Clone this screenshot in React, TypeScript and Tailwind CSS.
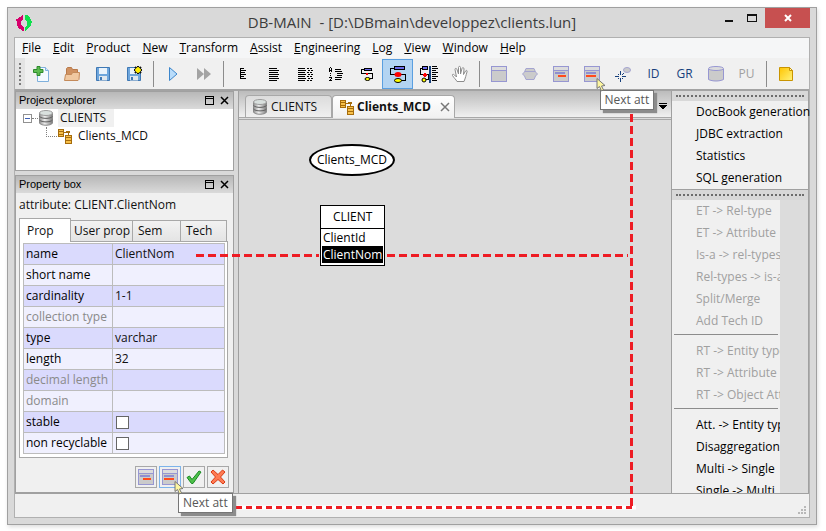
import type { ReactNode } from 'react';

const MENUS = [
  'File',
  'Edit',
  'Product',
  'New',
  'Transform',
  'Assist',
  'Engineering',
  'Log',
  'View',
  'Window',
  'Help',
];

const PROPERTIES = [
  { name: 'name', value: 'ClientNom' },
  { name: 'short name', value: '' },
  { name: 'cardinality', value: '1-1' },
  { name: 'collection type', value: '', disabled: true },
  { name: 'type', value: 'varchar' },
  { name: 'length', value: '32' },
  { name: 'decimal length', value: '', disabled: true },
  { name: 'domain', value: '', disabled: true },
  { name: 'stable', checkbox: true },
  { name: 'non recyclable', checkbox: true },
];

const PLUGINS = [
  'DocBook generation',
  'JDBC extraction',
  'Statistics',
  'SQL generation',
];

const TRANSFORMS = [
  {
    disabled: true,
    items: [
      'ET -> Rel-type',
      'ET -> Attribute',
      'Is-a -> rel-types',
      'Rel-types -> is-a',
      'Split/Merge',
      'Add Tech ID',
    ],
  },
  {
    disabled: true,
    items: ['RT -> Entity type', 'RT -> Attribute', 'RT -> Object Att'],
  },
  {
    disabled: false,
    items: [
      'Att. -> Entity type',
      'Disaggregation',
      'Multi -> Single',
      'Single -> Multi',
    ],
  },
];

function Icon({ children, size = 16 }: { children: ReactNode; size?: number }) {
  return (
    <svg
      width={size}
      height={size}
      viewBox={`0 0 ${size} ${size}`}
      fill="none"
      className="shrink-0"
      aria-hidden="true"
    >
      {children}
    </svg>
  );
}

function LogoIcon() {
  return (
    <Icon>
      <g shapeRendering="crispEdges">
        <path
          d="M7 0v5H6v1H5v4h1v1h1v1h1v4H6v-1H5v-1H3v-1H2v-2H1V6H0V4h2V3h1V2h2V1h1V0z"
          fill="#d6006c"
        />
        <path
          d="M9 16v-4h1v-1h1V6h-1V5H9V0h3v1h1v1h1v2h1v2h1v2h-1v3h-1v1h-1v1h-1v1h-1v1h-1v1z"
          fill="#0fe04c"
        />
      </g>
    </Icon>
  );
}

function NewIcon() {
  return (
    <Icon>
      <path d="M4.500 1.500h8l3 3v11h-11z" fill="#f4faff" stroke="#7fb0dc" />
      <path d="M12.500 1.500v3h3" fill="#d7eafa" stroke="#7fb0dc" />
      <path
        d="M4 .5h3v3h3v3H7v3H4v-3H.500v-3H4z"
        fill="#5dbb4f"
        stroke="#2c8a2c"
      />
    </Icon>
  );
}

function OpenIcon() {
  return (
    <Icon>
      <path
        d="M2.500 14V2.500l1-1h4l1 2h5v10.500z"
        fill="#cf9161"
        stroke="#b97a4b"
      />
      <path
        d="M.5 14.500l1-6h6l1-2h7l-.5 7-1 1z"
        fill="#f0c8a0"
        stroke="#c48a5a"
      />
    </Icon>
  );
}

function SaveIcon({ star }: { star?: boolean }) {
  return (
    <Icon>
      <path
        d="M1.500 1.500h13v13h-13z"
        fill="#6ea6dc"
        stroke="#3f78b4"
        strokeLinejoin="round"
      />
      <path d="M4 2h8v6H4z" fill="#eaf3fb" />
      <path d="M4 10h8v4.500H4z" fill="#dfe7ee" />
      <path d="M5 11h2v3H5z" fill="#3f78b4" />
      {star ? (
        <>
          <path
            d="M12 0v8M8 4h8M9 1l6 6M15 1L9 7"
            stroke="#111"
            strokeWidth="2"
          />
          <path d="M12 1v6M9 4h6" stroke="#ffee00" strokeWidth="1.500" />
          <circle cx="12" cy="4" r="2.500" fill="#ffee00" />
        </>
      ) : null}
    </Icon>
  );
}

function PlayIcon() {
  return (
    <Icon>
      <path d="M4.500 1.500v13L12 8z" fill="#b9dcfa" stroke="#3c86cc" />
    </Icon>
  );
}

function ForwardIcon() {
  return (
    <Icon>
      <path d="M1 2v12l7-6zM8 2v12l7-6z" fill="#a3a3a3" />
    </Icon>
  );
}

function TextViewIcon({ variant }: { variant: number }) {
  return (
    <Icon>
      <g stroke="#000" shapeRendering="crispEdges">
        {variant === 0 ? (
          <path d="M6 2.500h3M6 4.500h5M6 6.500h4M6 8.500h5M6 10.500h3M6 12.500h5M5.500 2v11" />
        ) : null}
        {variant === 1 ? (
          <path d="M3 2.500h8M3 4.500h10M3 6.500h9M3 8.500h10M3 10.500h9M3 12.500h10M3 14.500h8" />
        ) : null}
        {variant === 2 ? (
          <>
            <path d="M1 2.500h7M1 4.500h8M1 6.500h7M1 8.500h8M1 10.500h7M1 12.500h8M1 14.500h7" />
            <path
              d="M10 2.500h5M11 4.500h5M10 6.500h5M11 8.500h5M10 10.500h5M11 12.500h5M10 14.500h5"
              strokeDasharray="2 1"
            />
          </>
        ) : null}
        {variant === 3 ? (
          <>
            <path d="M7 3.500h6M7 5.500h7M9 7.500h6M9 9.500h5M7 11.500h7M7 13.500h6" />
            <path d="M1.500 2v4M3.500 2v4M2 1.500h1M2 4.500h1M2.500 7v1M2.500 9v1M1 11.500h3M3 12.500h1M2 13.500h1M1 14.500h3" />
          </>
        ) : null}
      </g>
    </Icon>
  );
}

function SchemaIcon({ variant }: { variant: 'small' | 'large' | 'mixed' }) {
  if (variant === 'small') {
    return (
      <Icon>
        <g shapeRendering="crispEdges">
          <path d="M5 3.500H2.500v4H8M9 7.500h4.500v5H10" stroke="#000" />
          <path d="M5.500 2.500h7v2h-7z" fill="#6b6bea" stroke="#000" />
          <path d="M7 7h2v2H7z" fill="#f00" />
        </g>
        <ellipse cx="8.500" cy="13" rx="2.500" ry="1.500" fill="#ff0" stroke="#000" />
      </Icon>
    );
  }
  if (variant === 'large') {
    return (
      <Icon size={18}>
        <g shapeRendering="crispEdges">
          <path d="M5 3.500H1.500v6H7M10 9.500h6.500v6H11" stroke="#000" />
          <path d="M5.500 1.500h10v3h-10z" fill="#6b6bea" stroke="#000" />
        </g>
        <ellipse cx="9" cy="9.500" rx="3.500" ry="2.500" fill="#f00" />
        <ellipse cx="9" cy="15.500" rx="3.500" ry="2" fill="#ff0" stroke="#000" />
      </Icon>
    );
  }
  return (
    <Icon size={18}>
      <g shapeRendering="crispEdges">
        <path d="M3 3.500H.5v6H4M5 9.500h3.500v5H6" stroke="#000" />
        <path d="M2.500 1.500h5v3h-5z" fill="#6b6bea" stroke="#000" />
        <path d="M3 9h4v2H3zM4 8h2v4H4z" fill="#f00" />
        <path d="M9 1h2v17H9z" fill="#17407c" />
        <path
          d="M12 1.500h5M12 3.500h6M12 5.500h4M12 7.500h6M12 9.500h4M12 11.500h6M12 13.500h4M12 15.500h5"
          stroke="#000"
        />
      </g>
      <circle cx="4" cy="15" r="2" fill="#ff0" stroke="#000" />
    </Icon>
  );
}

function HandIcon() {
  return (
    <Icon size={18}>
      <path
        d="M6 16.500c-1-2-3-3.500-4.500-6C1 9 2.500 9 3.500 10L5.500 12 4 4.500C4 3 5.500 3 6 4.500L7.500 9V2.500c0-1.500 2-1.500 2 0V9l1.500-5.500c.5-1.500 2-1 2 .5L12.500 9.500 14.500 6c.8-1.200 2-.5 1.500 1-1 3-1.500 6-3 9.500z"
        fill="#fff"
        stroke="#8c8c8c"
      />
    </Icon>
  );
}

function EntityIcon() {
  return (
    <Icon>
      <g shapeRendering="crispEdges">
        <path d="M.5.5h15v15H.5z" fill="#cbcbcb" stroke="#9797d2" />
        <path d="M1 4.500h14" stroke="#9797d2" />
        <path d="M1 1h14v3H1z" fill="#dcdcdc" />
      </g>
    </Icon>
  );
}

function RelTypeIcon() {
  return (
    <Icon>
      <path
        d="M4 2.500h8L13.500 6l2 2-2 2-1.500 3.500H4L2.500 10l-2-2 2-2z"
        fill="#cbcbcb"
        stroke="#a4a4d0"
      />
      <path d="M3 5.500h10" stroke="#a4a4d0" />
    </Icon>
  );
}

function AttributeIcon({ next }: { next?: boolean }) {
  return (
    <Icon>
      <g shapeRendering="crispEdges">
        <path d="M.5.5h15v15H.5z" fill="#cbcbcb" stroke="#9797d2" />
        <path d="M1 1h14v3H1z" fill="#dcdcdc" />
        <path d="M1 4.500h14" stroke="#9797d2" />
        <path d="M2 6h10v2H2z" fill="#8f8fd0" />
        <path d={next ? 'M2 9h10v2H2z' : 'M5 9h8v2H5z'} fill="#ff4a1c" />
      </g>
    </Icon>
  );
}

function RoleIcon() {
  return (
    <Icon>
      <g stroke="#17407c">
        <path
          d="M5.500 5v4M5.500 12v4M0 10.500h4M7 10.500h4"
          shapeRendering="crispEdges"
        />
        <path d="M3 8l1 1M7 9l2-2M3 13l1-1M8 13l-1-1" />
      </g>
      <ellipse cx="12" cy="4" rx="3.500" ry="2.500" fill="#cbcbcb" stroke="#a4a4d0" />
    </Icon>
  );
}

function CollectionIcon() {
  return (
    <Icon>
      <path
        d="M.5 3v10.500c4 2 11 2 15 0V3"
        fill="#cbcbcb"
        stroke="#9797d2"
      />
      <ellipse cx="8" cy="2.500" rx="7.500" ry="2" fill="#dcdcdc" stroke="#9797d2" />
    </Icon>
  );
}

function NoteIcon() {
  return (
    <Icon>
      <path d="M1.500 1.500h10l3 3v10h-13z" fill="url(#note)" stroke="#c99400" />
      <path d="M11.500 1.500v3h3z" fill="#fff8d0" stroke="#c99400" />
      <defs>
        <linearGradient id="note" x1="0" y1="0" x2="1" y2="1">
          <stop stopColor="#ffc400" />
          <stop offset="1" stopColor="#fff27a" />
        </linearGradient>
      </defs>
    </Icon>
  );
}

function DatabaseIcon() {
  return (
    <Icon>
      <path
        d="M1.500 3v10c1 3 12 3 13 0V3z"
        fill="url(#disk)"
        stroke="#8a8a8a"
      />
      <path
        d="M1.500 6.500c2 2.500 11 2.500 13 0M1.500 10c2 2.500 11 2.500 13 0"
        stroke="#5f5f5f"
      />
      <ellipse cx="8" cy="3" rx="6.500" ry="2.500" fill="#d9e0de" stroke="#9c9c9c" />
      <defs>
        <linearGradient id="disk" x1="0" y1="0" x2="1" y2="0">
          <stop stopColor="#8e8e8e" />
          <stop offset=".4" stopColor="#efefef" />
          <stop offset="1" stopColor="#7a7a7a" />
        </linearGradient>
      </defs>
    </Icon>
  );
}

function ModelIcon() {
  return (
    <Icon>
      <g shapeRendering="crispEdges" stroke="#a66c0c">
        <path d="M1.500 1.500h5v7h-5z" fill="#f7c04a" />
        <path d="M8.500 7.500h6v8h-6z" fill="#f7c04a" />
        <path d="M2 3.500h4M2 6.500h4M9 9.500h5M9 12.500h5M7 4.500h2M11.500 5v2" />
        <path d="M9.500 3.500h3v1h-3z" fill="#f7c04a" />
      </g>
    </Icon>
  );
}

function CheckIcon() {
  return (
    <Icon>
      <path
        d="M1 8.500L3.500 7 6 10.500 13 2l2 1L7 14.500H5.500z"
        fill="#4fc04a"
        stroke="#188a22"
      />
    </Icon>
  );
}

function CancelIcon() {
  return (
    <Icon>
      <path
        d="M1 3l2-2 5 4.500L12.500 1 15 3l-4.500 5L15 13l-2 2-5-4.500L3 15l-2-2 4.500-5z"
        fill="#ff7a52"
        stroke="#d83a14"
      />
    </Icon>
  );
}

function HoverTip() {
  return (
    <>
      <span className="absolute left-full top-full z-20 -mt-1 -ml-1">
        <svg width="10" height="15" viewBox="0 0 10 15" aria-hidden="true">
          <path
            d="M1 .5v10l2.500-2 2 4.500 2-1-2-4 3.500-.5z"
            fill="#fdf6a0"
            stroke="#777"
          />
        </svg>
      </span>
      <span
        role="tooltip"
        className="absolute left-full top-full z-10 mt-2 border border-[#767676] bg-white px-1 leading-[18px] whitespace-nowrap text-[#575757] shadow-[3px_3px_1px_#8c8c8c]"
      >
        Next att
      </span>
    </>
  );
}

function ToolButton({
  label,
  selected,
  hint,
  children,
}: {
  label: string;
  selected?: boolean;
  hint?: boolean;
  children: ReactNode;
}) {
  return (
    <button
      type="button"
      aria-label={label}
      className={
        selected
          ? 'flex h-[30px] w-[31px] items-center justify-center border border-[#5a9fe0] bg-[#b3d4f2]'
          : 'flex h-[30px] w-[31px] items-center justify-center'
      }
    >
      {hint ? (
        <span className="relative">
          {children}
          <HoverTip />
        </span>
      ) : (
        children
      )}
    </button>
  );
}

function ToolSeparator() {
  return (
    <span className="flex w-2 justify-center">
      <span className="h-[26px] w-px bg-[#8c8c8c]" />
    </span>
  );
}

function Toolbar() {
  return (
    <div
      role="toolbar"
      className="flex h-[33px] items-center border-b-2 border-[#a3a3a3] bg-[#f0f0f0]"
    >
      <span className="flex h-full w-[10px] items-center justify-center bg-[#e4e4e4]">
        <span className="h-[22px] border-l-2 border-dotted border-[#7c7c7c]" />
      </span>
      <ToolButton label="New"><NewIcon /></ToolButton>
      <ToolButton label="Open"><OpenIcon /></ToolButton>
      <ToolButton label="Save"><SaveIcon /></ToolButton>
      <ToolButton label="Save as"><SaveIcon star /></ToolButton>
      <ToolSeparator />
      <ToolButton label="Run"><PlayIcon /></ToolButton>
      <ToolButton label="Continue"><ForwardIcon /></ToolButton>
      <ToolSeparator />
      <ToolButton label="Text compact"><TextViewIcon variant={0} /></ToolButton>
      <ToolButton label="Text standard"><TextViewIcon variant={1} /></ToolButton>
      <ToolButton label="Text extended"><TextViewIcon variant={2} /></ToolButton>
      <ToolButton label="Text sorted"><TextViewIcon variant={3} /></ToolButton>
      <ToolButton label="Graph compact"><SchemaIcon variant="small" /></ToolButton>
      <ToolButton label="Graph standard" selected><SchemaIcon variant="large" /></ToolButton>
      <ToolButton label="Graph dependency"><SchemaIcon variant="mixed" /></ToolButton>
      <ToolButton label="Move"><HandIcon /></ToolButton>
      <ToolSeparator />
      <ToolButton label="Entity type"><EntityIcon /></ToolButton>
      <ToolButton label="Rel-type"><RelTypeIcon /></ToolButton>
      <ToolButton label="First att"><AttributeIcon /></ToolButton>
      <ToolButton label="Next att" hint><AttributeIcon next /></ToolButton>
      <ToolButton label="Role"><RoleIcon /></ToolButton>
      <ToolButton label="Identifier">
        <span className="text-[#17407c]">ID</span>
      </ToolButton>
      <ToolButton label="Group">
        <span className="text-[#17407c]">GR</span>
      </ToolButton>
      <ToolButton label="Collection"><CollectionIcon /></ToolButton>
      <ToolButton label="Processing unit">
        <span className="text-[#a0a0a0]">PU</span>
      </ToolButton>
      <ToolSeparator />
      <ToolButton label="Note"><NoteIcon /></ToolButton>
    </div>
  );
}

function PanelHeader({ title }: { title: string }) {
  return (
    <header className="flex h-[17px] items-center bg-linear-to-b from-[#b8b8b8] to-[#dadada] pr-1 pl-[3px] font-['Liberation_Sans',sans-serif] text-[11px] text-black">
      <h2 className="flex-1">{title}</h2>
      <button type="button" aria-label={`Maximize ${title}`} className="w-[15px]">
        <svg width="9" height="9" viewBox="0 0 9 9" shapeRendering="crispEdges">
          <path d="M.5.5h8v8h-8zM1 2.500h7" fill="none" stroke="#000" />
        </svg>
      </button>
      <button type="button" aria-label={`Close ${title}`}>
        <svg width="9" height="9" viewBox="0 0 9 9">
          <path d="M1 1l7 7M8 1L1 8" stroke="#000" strokeWidth="1.500" />
        </svg>
      </button>
    </header>
  );
}

function ProjectExplorer() {
  return (
    <section className="h-20 border border-[#a0a0a0] bg-white">
      <PanelHeader title="Project explorer" />
      <ul>
        <li>
          <div className="flex h-[18px] items-center pl-[7px]">
            <button type="button" aria-label="Collapse CLIENTS">
              <svg width="9" height="9" viewBox="0 0 9 9" shapeRendering="crispEdges">
                <path d="M.5.5h8v8h-8z" fill="#fff" stroke="#919191" />
                <path d="M2 4.500h5" stroke="#3c5fb4" />
              </svg>
            </button>
            <span className="w-[6px] border-t border-dotted border-[#808080]" />
            <DatabaseIcon />
            <span className="ml-1 bg-[#f0f0f0] pr-2 pl-[2px] leading-[18px]">CLIENTS</span>
          </div>
          <ul>
            <li className="flex h-[18px] items-center pl-[30px]">
              <span className="mb-2 h-[10px] w-[11px] border-b border-l border-dotted border-[#808080]" />
              <ModelIcon />
              <span className="ml-[5px]">Clients_MCD</span>
            </li>
          </ul>
        </li>
      </ul>
    </section>
  );
}

function PropertyTable() {
  return (
    <table className="w-full table-fixed border-collapse border border-[#a8a8a8]">
      <colgroup>
        <col className="w-[89px]" />
        <col />
      </colgroup>
      <tbody>
        {PROPERTIES.map((p, i) => (
          <tr
            key={p.name}
            className={i % 2 === 0 ? 'h-[21px] bg-[#dadafd]' : 'h-[21px] bg-[#f0f0fe]'}
          >
            <th
              scope="row"
              className={
                p.disabled
                  ? 'border border-[#bcbcbc] p-0 pl-[2px] text-left font-normal text-[#8a8a8a]'
                  : 'border border-[#bcbcbc] p-0 pl-[2px] text-left font-normal text-black'
              }
            >
              {p.name}
            </th>
            <td className="border border-[#bcbcbc] p-0 pl-[2px]">
              {p.checkbox ? (
                <input
                  type="checkbox"
                  aria-label={p.name}
                  className="ml-px block size-[13px] appearance-none border border-[#666] bg-white"
                />
              ) : (
                p.value
              )}
            </td>
          </tr>
        ))}
      </tbody>
    </table>
  );
}

function PropertyBox() {
  return (
    <section className="flex min-h-0 flex-1 flex-col border border-[#a0a0a0] bg-[#f0f0f0]">
      <PanelHeader title="Property box" />
      <p className="pt-[3px] pl-[3px] leading-[18px]">attribute: CLIENT.ClientNom</p>
      <div role="tablist" className="mt-1 flex items-end px-[3px]">
        <button
          type="button"
          role="tab"
          aria-selected="true"
          className="relative -mb-px h-[24px] w-[52px] border border-b-0 border-[#a8a8a8] bg-white pl-[7px] text-left"
        >
          Prop
        </button>
        <button
          type="button"
          role="tab"
          className="h-[21px] w-[62px] border border-b-0 border-l-0 border-[#a8a8a8] bg-linear-to-b from-[#f2f2f2] to-[#e4e4e4] pl-[3px] text-left whitespace-nowrap"
        >
          User prop
        </button>
        <button
          type="button"
          role="tab"
          className="h-[21px] w-12 border border-b-0 border-l-0 border-[#a8a8a8] bg-linear-to-b from-[#f2f2f2] to-[#e4e4e4] pl-[5px] text-left"
        >
          Sem
        </button>
        <button
          type="button"
          role="tab"
          className="h-[21px] w-[46px] border border-b-0 border-l-0 border-[#a8a8a8] bg-linear-to-b from-[#f2f2f2] to-[#e4e4e4] pl-[5px] text-left"
        >
          Tech
        </button>
      </div>
      <div className="mr-[5px] ml-[3px] border border-[#a8a8a8] bg-white pt-px pr-[2px] pb-[3px] pl-[3px]">
        <PropertyTable />
      </div>
      <div className="flex justify-end gap-[2px] pt-2 pr-[4px]">
        <button
          type="button"
          aria-label="First att"
          className="flex size-[22px] items-center justify-center border border-[#a8a8a8]"
        >
          <AttributeIcon />
        </button>
        <button
          type="button"
          aria-label="Next att"
          className="flex size-[22px] items-center justify-center border border-[#7db4ea]"
        >
          <span className="relative">
            <AttributeIcon next />
            <HoverTip />
          </span>
        </button>
        <button
          type="button"
          aria-label="Apply"
          className="flex size-[22px] items-center justify-center border border-[#a8a8a8]"
        >
          <CheckIcon />
        </button>
        <button
          type="button"
          aria-label="Cancel"
          className="flex size-[22px] items-center justify-center border border-[#a8a8a8]"
        >
          <CancelIcon />
        </button>
      </div>
    </section>
  );
}

function Workspace() {
  return (
    <main className="flex min-w-0 flex-1 flex-col border-l border-[#a0a0a0] bg-[#dcdcdc]">
      <div
        role="tablist"
        className="flex h-[27px] items-end border-b border-[#a8a8a8] bg-linear-to-b from-[#bcbcbc] to-[#f0f0f0] pl-[6px]"
      >
        <button
          type="button"
          role="tab"
          className="flex h-[22px] w-[87px] items-center gap-[3px] rounded-t-sm border border-b-0 border-[#a8a8a8] bg-linear-to-b from-[#dcdcdc] to-[#f0f0f0] pl-[6px]"
        >
          <DatabaseIcon />
          CLIENTS
        </button>
        <div className="-mb-px flex h-[23px] w-[123px] items-center rounded-t-sm border border-b-0 border-[#a8a8a8] bg-linear-to-b from-white to-[#f0f0f0] pl-[6px]">
          <button
            type="button"
            role="tab"
            aria-selected="true"
            className="flex flex-1 items-center gap-[2px] font-bold"
          >
            <ModelIcon />
            Clients_MCD
          </button>
          <button type="button" aria-label="Close Clients_MCD" className="pr-[4px]">
            <svg width="10" height="10" viewBox="0 0 10 10">
              <path d="M1 1l8 8M9 1L1 9" stroke="#777" strokeWidth="1.500" />
            </svg>
          </button>
        </div>
        <button type="button" aria-label="Tab list" className="mr-1 mb-2 ml-auto">
          <svg width="8" height="6" viewBox="0 0 8 6" shapeRendering="crispEdges">
            <path d="M0 0h8v1H0zM0 2h8v1L4 6 0 3z" fill="#000" />
          </svg>
        </button>
      </div>
      <div className="relative mt-px flex-1 overflow-hidden border-t border-[#a8a8a8] text-black">
        <div className="absolute top-[24px] left-[70px] rounded-[50%] border-2 border-black bg-white px-[6px] py-[2px] leading-6">
          Clients_MCD
        </div>
        <div className="absolute top-[85px] left-[81px] border border-black bg-white">
          <div className="border-b border-black text-center leading-[22px]">CLIENT</div>
          <div className="px-px pb-[2px] leading-[17px]">
            <div className="px-px">ClientId</div>
            <div className="bg-black px-px text-white">ClientNom</div>
          </div>
        </div>
      </div>
    </main>
  );
}

function Grip() {
  return (
    <div className="flex h-[10px] items-center bg-[#d8d8d8] px-1">
      <span className="flex-1 border-t-2 border-dotted border-[#6c6c6c]" />
    </div>
  );
}

function SideTools() {
  return (
    <aside className="flex w-[138px] shrink-0 flex-col border-x border-[#a0a0a0] bg-[#dcdcdc]">
      <section className="border-b border-[#a0a0a0] bg-[#f0f0f0]">
        <Grip />
        {PLUGINS.map((item) => (
          <button
            key={item}
            type="button"
            className="block w-full pl-6 text-left leading-[22px] whitespace-nowrap text-black"
          >
            {item}
          </button>
        ))}
      </section>
      <Grip />
      <section className="h-0 w-[108px] flex-auto overflow-hidden bg-[#f0f0f0]">
        {TRANSFORMS.map((group, i) => (
          <div
            key={group.items[0]}
            className={i > 0 ? 'mt-[2px] mr-[2px] ml-[2px] border-t border-[#8c8c8c] pt-[5px]' : 'mx-[2px]'}
          >
            {group.items.map((item) => (
              <button
                key={item}
                type="button"
                disabled={group.disabled}
                className="block w-full pl-[22px] text-left leading-[22px] whitespace-nowrap text-black disabled:text-[#a0a0a0]"
              >
                {item}
              </button>
            ))}
          </div>
        ))}
      </section>
    </aside>
  );
}

// Dashed red path that links the property, the entity and both "Next att" buttons.
function GuidePath() {
  return (
    <svg
      className="pointer-events-none absolute inset-0 h-full w-full"
      fill="none"
      stroke="#ee1c24"
      strokeWidth="3"
      aria-hidden="true"
    >
      <path d="M237 507.500H636" stroke="#fff" strokeWidth="4" />
      <path d="M196 255.500H319M387 255.500H628" strokeDasharray="8 4" />
      <path d="M631.500 114V509" strokeDasharray="8 4" />
      <path d="M236 507.500H633" strokeDasharray="6 4" />
    </svg>
  );
}

export default function App() {
  return (
    <div className="relative flex h-screen bg-white pt-[7px] pr-[9px] pb-[6px] pl-[7px] font-['Open_Sans',sans-serif] text-xs text-[#111]">
      <div className="flex min-w-0 flex-1 flex-col border border-[#a0a0a0] bg-[#d9d9d9] shadow-[1px_2px_4px_#ddd]">
        <header className="grid h-[29px] shrink-0 grid-cols-[1fr_auto_1fr]">
          <span className="flex items-center pl-2"><LogoIcon /></span>
          <h1 className="text-[15px] leading-[29px] whitespace-pre text-[#3c3c3c]">
            {'DB-MAIN  - [D:\\DBmain\\developpez\\clients.lun]'}
          </h1>
          <div className="mr-[6px] flex h-5 justify-end">
            <button type="button" aria-label="Minimize" className="w-7">
              <svg width="28" height="20" viewBox="0 0 28 20">
                <path d="M16 12h8v2h-8z" fill="#111" />
              </svg>
            </button>
            <button type="button" aria-label="Maximize" className="w-7">
              <svg width="28" height="20" viewBox="0 0 28 20" shapeRendering="crispEdges">
                <path d="M10.500 6.500h9v7h-9z" stroke="#111" fill="none" />
                <path d="M10 6h10v2H10z" fill="#111" />
              </svg>
            </button>
            <button
              type="button"
              aria-label="Close"
              className="flex w-[45px] items-center justify-center bg-[#c75050]"
            >
              <svg width="8" height="8" viewBox="0 0 8 8">
                <path d="M1 1l6 6M7 1L1 7" stroke="#fff" strokeWidth="2" />
              </svg>
            </button>
          </div>
        </header>
        <div className="mx-[6px] mb-[6px] flex min-h-0 flex-1 flex-col border border-[#b0b0b0]">
          <nav className="flex h-5 items-center gap-3 bg-[#f5f6f7] pl-[7px] text-black">
            {MENUS.map((menu) => (
              <button key={menu} type="button">
                <span className="underline">{menu[0]}</span>
                {menu.slice(1)}
              </button>
            ))}
          </nav>
          <Toolbar />
          <div className="flex min-h-0 flex-1">
            <div className="mr-1 flex w-[219px] shrink-0 flex-col gap-1">
              <ProjectExplorer />
              <PropertyBox />
            </div>
            <Workspace />
            <SideTools />
          </div>
          <footer className="flex h-6 items-end justify-end border-t border-[#a0a0a0] bg-[#f0f0f0] p-[2px]">
            <svg width="9" height="9" viewBox="0 0 9 9" shapeRendering="crispEdges">
              <path
                d="M6 0h2v2H6zM3 3h2v2H3zM6 3h2v2H6zM0 6h2v2H0zM3 6h2v2H3zM6 6h2v2H6z"
                fill="#b8b8b8"
              />
            </svg>
          </footer>
        </div>
      </div>
      <GuidePath />
    </div>
  );
}
